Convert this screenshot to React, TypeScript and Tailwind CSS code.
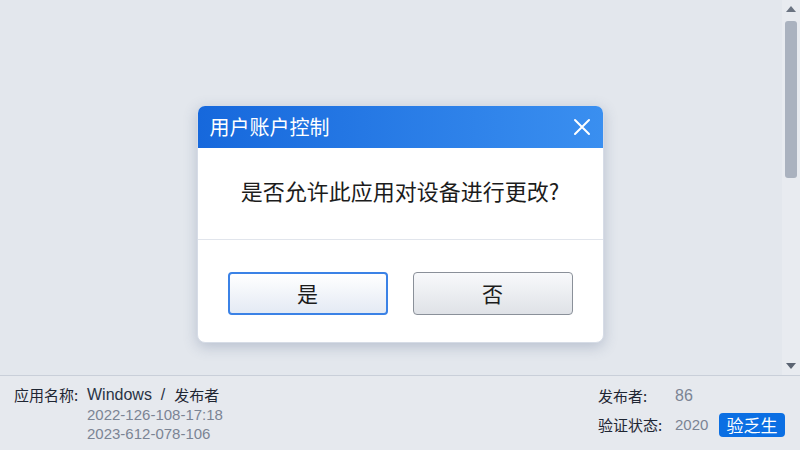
import React from "react";

export default function App() {
  const font = { fontFamily: '"Noto Sans CJK SC", "Noto Sans", sans-serif' };
  const lat = { fontFamily: '"Liberation Sans", "Noto Sans CJK SC", sans-serif' };
  return (
    <div className="w-[800px] h-[450px] bg-[#e3e7ed] flex flex-col overflow-hidden" style={font}>
      <div className="flex h-[375px]">
        <div className="flex-1 flex items-start justify-center pt-[105px] pl-[18px]">
          <div className="w-[407px] h-[238px] bg-white rounded-[8px] shadow-[0_4px_14px_rgba(60,80,120,0.25)] flex flex-col overflow-hidden border border-[#d6dce6]">
            <div className="h-[42px] bg-gradient-to-r from-[#1668dc] to-[#3a8ff0] flex items-center justify-between pl-[12px] pr-[12px]">
              <span className="text-white text-[20px] leading-none">用户账户控制</span>
              <svg width="18" height="18" viewBox="0 0 18 18">
                <path d="M2 2 L16 16 M16 2 L2 16" stroke="white" strokeWidth="2" strokeLinecap="round" />
              </svg>
            </div>
            <div className="h-[92px] flex items-center justify-center border-b border-[#e1e5ec]">
              <span className="text-[22px] text-[#1c1c1c] leading-none pb-[8px]">是否允许此应用对设备进行更改?</span>
            </div>
            <div className="flex-1 flex justify-between px-[30px] pt-[32px]">
              <button className="w-[160px] h-[43px] rounded-[4px] border-2 border-[#3b82e6] bg-gradient-to-b from-[#ffffff] to-[#e4eaf4] text-[21px] text-[#1c1c1c]">是</button>
              <button className="w-[160px] h-[43px] rounded-[4px] border border-[#8a9099] bg-gradient-to-b from-[#f8f9fb] to-[#dfe2e7] text-[21px] text-[#1c1c1c]">否</button>
            </div>
          </div>
        </div>
        <div className="w-[18px] bg-[#e8ebf0] flex flex-col items-center">
          <div className="pt-[6px] h-[18px]">
            <div className="w-0 h-0 border-l-[5px] border-r-[5px] border-b-[6px] border-l-transparent border-r-transparent border-b-[#6b7482]"></div>
          </div>
          <div className="w-[12px] h-[157px] rounded-[3px] bg-[#aab2bf] mt-[3px]"></div>
          <div className="flex-1"></div>
          <div className="pb-[6px]">
            <div className="w-0 h-0 border-l-[5px] border-r-[5px] border-t-[6px] border-l-transparent border-r-transparent border-t-[#5b6472]"></div>
          </div>
        </div>
      </div>
      <div className="flex-1 border-t border-[#c9cfd9] bg-[#e6e9ee] flex justify-between pl-[14px] pr-[15px] pt-[9px]">
        <div className="flex flex-col">
          <div className="text-[15px] leading-[20px] text-[#1f2633] flex">
            <span className="w-[73px]">应用名称:</span>
            <span style={lat} className="text-[#2a3345] text-[16px]">Windows&nbsp;&nbsp;/&nbsp;&nbsp;</span>
            <span>发布者</span>
          </div>
          <div className="pl-[73px] text-[15px] leading-[19px] text-[#7b8494]" style={lat}>
            <div>2022-126-108-17:18</div>
            <div>2023-612-078-106</div>
          </div>
        </div>
        <div className="flex flex-col gap-[6px]">
          <div className="flex items-center h-[22px] text-[15px] text-[#1f2633]">
            <span className="w-[77px]">发布者:</span>
            <span className="text-[#7b8494] text-[16px]" style={lat}>86</span>
          </div>
          <div className="flex items-center h-[24px] text-[15px] text-[#1f2633]">
            <span className="w-[77px]">验证状态:</span>
            <span className="text-[#7b8494] w-[44px] text-[15px]" style={lat}>2020</span>
            <span className="w-[66px] h-[24px] rounded-[4px] bg-[#0b6fe3] text-white text-[17px] flex items-center justify-center">验乏生</span>
          </div>
        </div>
      </div>
    </div>
  );
}
